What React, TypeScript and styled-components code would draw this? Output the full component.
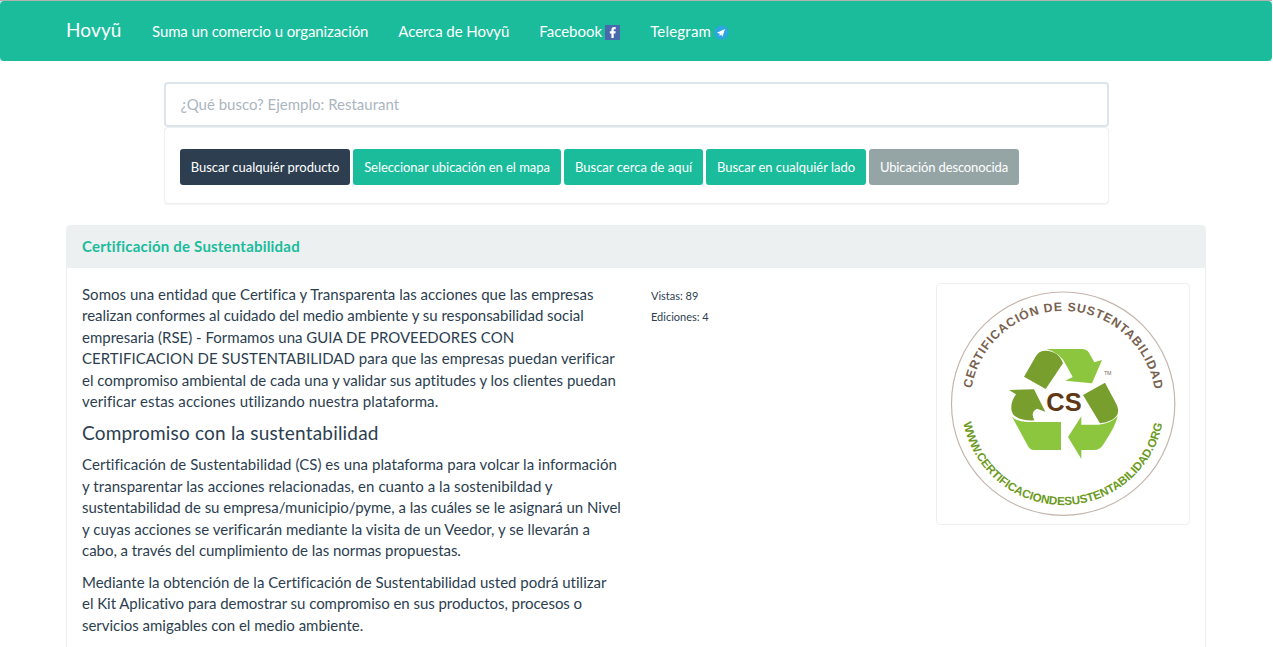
import React from "react";
import styled, { createGlobalStyle } from "styled-components";

const GlobalStyle = createGlobalStyle`
  *, *::before, *::after { box-sizing: border-box; }
  html, body { height: 647px; overflow: hidden; }
  body {
    margin: 0;
    width: 1272px;
    background: #fff;
    color: #2c3e50;
    font: 15px/1.42857143 Lato, "Liberation Sans", sans-serif;
    font-variant-ligatures: none;
    border-top: 1px solid #b2b2b2;
  }
`;

const Navbar = styled.nav`
  height: 60px;
  margin-bottom: 21px;
  background: #1abc9c;
  border-radius: 4px;
`;

const Container = styled.div`
  width: 1140px;
  margin: 0 auto;
`;

const NavItems = styled(Container)`
  display: flex;
  height: 60px;
`;

const Brand = styled.a`
  width: 71px;
  padding: 18px 0 0;
  color: #fff;
  font-size: 19px;
  line-height: 21px;
  letter-spacing: 0.12px;
`;

const NavLink = styled.a<{ $spacing?: number }>`
  display: flex;
  gap: 3px;
  padding: 20px 15px 0;
  color: #fff;
  line-height: 21px;
  letter-spacing: ${({ $spacing = 0 }) => $spacing}px;
  white-space: nowrap;

  svg { margin-top: 4px; }
`;

const Search = styled.section`
  width: 945px;
  margin: 0 auto 20px;
`;

const SearchInput = styled.input`
  display: block;
  width: 100%;
  height: 45px;
  padding: 9px 15px 11px;
  border: 2px solid #dce4ec;
  border-radius: 4px;
  background: #fff;
  color: #2c3e50;
  font: inherit;

  &::placeholder { color: #acb6c0; opacity: 1; }
`;

const Card = styled.section`
  border: 1px solid #ecf0f1;
  border-radius: 4px;
  background: #fff;
  box-shadow: 0 1px 1px rgba(0, 0, 0, 0.05);
`;

const Filters = styled(Card)`
  display: flex;
  gap: 3px;
  height: 77px;
  margin-bottom: 21px;
  padding: 21px 15px 19px;
`;

const FilterButton = styled.button<{ $color: string; $width: number; $spacing: number }>`
  width: ${({ $width }) => $width}px;
  height: 36px;
  padding: 0 0 0 1px;
  border: 0;
  border-radius: 3px;
  background: ${({ $color }) => $color};
  color: #fff;
  font: 13px/36px Lato, "Liberation Sans", sans-serif;
  letter-spacing: ${({ $spacing }) => $spacing}px;
  white-space: nowrap;
`;

const CardHeading = styled.h3`
  height: 42px;
  margin: 0;
  padding: 10px 15px;
  background: #ecf0f1;
  color: #1abc9c;
  font-size: 15px;
  font-weight: 700;
  line-height: 21px;
  letter-spacing: 0.2px;
`;

const CardBody = styled.div`
  display: grid;
  grid-template-columns: 539px 254.5px 254.5px;
  column-gap: 30px;
  align-items: start;
  padding: 15px;
`;

const Description = styled.div`
  padding-top: 1px;
`;

const Paragraph = styled.p`
  margin: 0 0 10.5px;
`;

const Line = styled.span<{ $spacing: number }>`
  display: block;
  letter-spacing: ${({ $spacing }) => $spacing}px;
  white-space: nowrap;
`;

const Subtitle = styled.h4`
  margin: 10.5px 0;
  font-size: 19px;
  font-weight: 400;
  line-height: 1.1;
  letter-spacing: 0.19px;
`;

const Stats = styled.div`
  display: flex;
  flex-direction: column;
  padding-top: 2px;
  font-size: 11px;
  line-height: 21.4px;
`;

const Thumbnail = styled.div`
  height: 242px;
  padding: 4px;
  border: 1px solid #ecf0f1;
  border-radius: 4px;
  svg { display: block; width: 100%; height: 100%; }
`;

const FacebookIcon = () => (
  <svg width="15" height="15" viewBox="0 0 15 15">
    <path fill="#4a69ad" d="M0 0h15v15H0z" />
    <path fill="#fff" d="M6.4 13V8.4H4.8V6.2h1.6V5c0-2 .9-3 2.8-3h1.5v2.2H9.6c-.7 0-.9.3-.9.9v1.1h2l-.3 2.2H8.7V13z" />
  </svg>
);

const TelegramIcon = () => (
  <svg width="15" height="15" viewBox="0 0 15 15">
    <circle cx="7.5" cy="7.5" r="7" fill="#2ca5e0" />
    <path fill="#fff" d="M2.9 7.7 11 4 8.5 11.7 7.4 9.8 5.4 11 5.8 8.8z" />
  </svg>
);

const Seal = () => (
  <svg viewBox="33 39 733.5 696" fontFamily="Liberation Sans, Arial, sans-serif">
    <defs>
      <path id="upper-arc" d="M121 386A278 278 0 0 1 677 386" />
      <path id="lower-arc" d="M95 386A304 304 0 0 0 703 386" />
    </defs>
    <circle cx="399.500" cy="386" r="335" fill="#fff" stroke="#c4b5ac" strokeWidth="3.500" />
    <text fill="#78614f" fontSize="37" fontWeight="700">
      <textPath href="#upper-arc" startOffset="46" textLength="784">CERTIFICACIÓN DE SUSTENTABILIDAD</textPath>
    </text>
    <text fill="#6b9a20" fontSize="35" fontWeight="700">
      <textPath href="#lower-arc" startOffset="58" textLength="836">WWW.CERTIFICACIONDESUSTENTABILIDAD.ORG</textPath>
    </text>
    <g fill="#789e2e">
      <path d="M282 305 318 243Q327 227 347 227Q386 228 399 265L347 342Z" />
      <path d="M459 360 525 323 559 387Q568 406 562 419Q550 440 510 445Z" />
      <path d="M237 345 312 343 346 410 321 401Q300 411 313 436Q271 438 250 419C238 400 245 376 258 358Z" />
    </g>
    <g fill="#8cc63f">
      <path d="M349 222H455Q470 222 477 233L493 262 516 255 486 325 406 317 428 306 410 273Q391 232 349 222Z" />
      <path d="M246 425Q260 440 293 441H393V525H311Q300 525 294 514Z" />
      <path d="M414 486 454 424V449H506Q545 444 563 423Q558 451 521 507Q510 525 492 525H454V552Z" />
    </g>
    <text x="349" y="407" fill="#603813" fontSize="80" fontWeight="700" textLength="106" lengthAdjust="spacingAndGlyphs">CS</text>
    <text x="522" y="300" fill="#786b62" fontSize="16" textLength="22">TM</text>
  </svg>
);

const GREEN = "#1abc9c";
const filters = [
  { label: "Buscar cualquiér producto", color: "#2c3e50", width: 170, spacing: 0 },
  { label: "Seleccionar ubicación en el mapa", color: GREEN, width: 208, spacing: -0.05 },
  { label: "Buscar cerca de aquí", color: GREEN, width: 139, spacing: 0.03 },
  { label: "Buscar en cualquiér lado", color: GREEN, width: 160, spacing: -0.02 },
  { label: "Ubicación desconocida", color: "#95a5a6", width: 150, spacing: -0.12 },
];

const intro: [string, number][] = [
  ["Somos una entidad que Certifica y Transparenta las acciones que las empresas", 0.02],
  ["realizan conformes al cuidado del medio ambiente y su responsabilidad social", -0.027],
  ["empresaria (RSE) - Formamos una GUIA DE PROVEEDORES CON", 0],
  ["CERTIFICACION DE SUSTENTABILIDAD para que las empresas puedan verificar", 0.045],
  ["el compromiso ambiental de cada una y validar sus aptitudes y los clientes puedan", -0.012],
  ["verificar estas acciones utilizando nuestra plataforma.", 0.11],
];

const commitment: [string, number][] = [
  ["Certificación de Sustentabilidad (CS) es una plataforma para volcar la información", 0.05],
  ["y transparentar las acciones relacionadas, en cuanto a la sostenibildad y", 0.055],
  ["sustentabilidad de su empresa/municipio/pyme, a las cuáles se le asignará un Nivel", -0.025],
  ["y cuyas acciones se verificarán mediante la visita de un Veedor, y se llevarán a", 0.02],
  ["cabo, a través del cumplimiento de las normas propuestas.", -0.035],
];

const kit: [string, number][] = [
  ["Mediante la obtención de la Certificación de Sustentabilidad usted podrá utilizar", 0],
  ["el Kit Aplicativo para demostrar su compromiso en sus productos, procesos o", -0.04],
  ["servicios amigables con el medio ambiente.", -0.02],
];

const TextBlock = ({ lines }: { lines: [string, number][] }) => (
  <Paragraph>
    {lines.map(([text, spacing]) => (
      <Line key={text} $spacing={spacing}>{text}</Line>
    ))}
  </Paragraph>
);

export default function App() {
  return (
    <>
      <GlobalStyle />
      <Navbar>
        <NavItems>
          <Brand>Hovyũ</Brand>
          <NavLink $spacing={-0.11}>Suma un comercio u organización</NavLink>
          <NavLink $spacing={-0.07}>Acerca de Hovyũ</NavLink>
          <NavLink>Facebook <FacebookIcon /></NavLink>
          <NavLink $spacing={0.2}>Telegram <TelegramIcon /></NavLink>
        </NavItems>
      </Navbar>
      <Search>
        <SearchInput placeholder="¿Qué busco? Ejemplo: Restaurant" />
        <Filters>
          {filters.map(({ label, color, width, spacing }) => (
            <FilterButton key={label} $color={color} $width={width} $spacing={spacing}>{label}</FilterButton>
          ))}
        </Filters>
      </Search>
      <Container>
        <Card>
          <CardHeading>Certificación de Sustentabilidad</CardHeading>
          <CardBody>
            <Description>
              <TextBlock lines={intro} />
              <Subtitle>Compromiso con la sustentabilidad</Subtitle>
              <TextBlock lines={commitment} />
              <TextBlock lines={kit} />
            </Description>
            <Stats>
              <span>Vistas: 89</span>
              <span>Ediciones: 4</span>
            </Stats>
            <Thumbnail><Seal /></Thumbnail>
          </CardBody>
        </Card>
      </Container>
    </>
  );
}
